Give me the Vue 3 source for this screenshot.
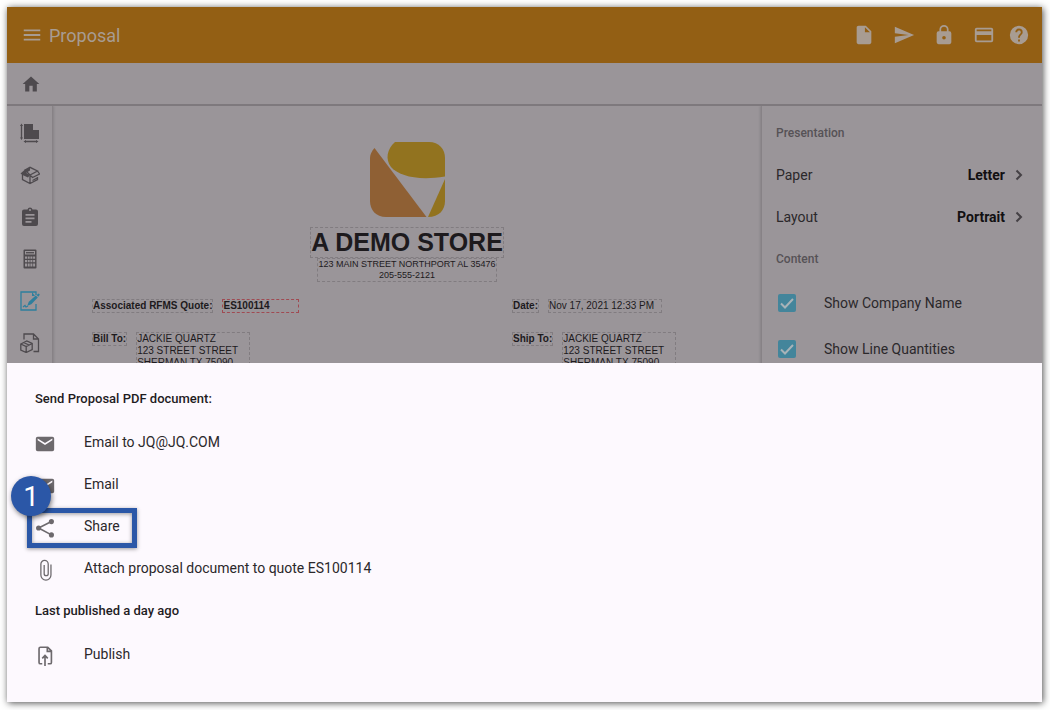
<script setup>
import { ref } from 'vue'

const actions = [
  { name: 'file', label: 'New document', d: 'M6 2c-1.100 0-2 .9-2 2v16c0 1.100.9 2 2 2h12c1.100 0 2-.9 2-2V8l-6-6H6zm7 7V3.500L18.500 9H13z' },
  { name: 'send', label: 'Send', d: 'M2 21l21-9L2 3v7l15 2-15 2z' },
  { name: 'lock', label: 'Lock', d: 'M18 8h-1V6A5 5 0 0 0 7 6v2H6a2 2 0 0 0-2 2v10a2 2 0 0 0 2 2h12a2 2 0 0 0 2-2V10a2 2 0 0 0-2-2zm-6 9a2 2 0 1 1 0-4 2 2 0 0 1 0 4zm3.100-9H8.900V6a3.100 3.100 0 0 1 6.200 0v2z' },
  { name: 'card', label: 'Payment', d: 'M20 4H4a2 2 0 0 0-2 2v12a2 2 0 0 0 2 2h16a2 2 0 0 0 2-2V6a2 2 0 0 0-2-2zm0 14H4v-6h16v6zm0-10H4V6h16v2z' },
  { name: 'help', label: 'Help', d: 'M12 2a10 10 0 1 0 0 20 10 10 0 0 0 0-20zm1 17h-2v-2h2v2zm2.070-7.750l-.9.920C13.450 12.900 13 13.500 13 15h-2v-.5c0-1.100.450-2.100 1.170-2.830l1.240-1.260A2 2 0 1 0 10 9H8a4 4 0 1 1 8 0c0 .880-.360 1.680-.930 2.250z' }
]

const tools = ['area', 'product', 'worksheet', 'calculator', 'proposal', 'order']

const settings = [
  { label: 'Paper', value: 'Letter' },
  { label: 'Layout', value: 'Portrait' }
]

const content = ref([
  { id: 'company', label: 'Show Company Name', on: true },
  { id: 'quantities', label: 'Show Line Quantities', on: true }
])

const address = ['JACKIE QUARTZ', '123 STREET STREET', 'SHERMAN TX 75090']

const sendItems = [
  { icon: 'mail', label: 'Email to JQ@JQ.COM' },
  { icon: 'mail', label: 'Email' },
  { icon: 'share', label: 'Share', step: 1 },
  { icon: 'clip', label: 'Attach proposal document to quote ES100114' }
]
</script>

<template>
  <div class="frame">
    <header class="appbar">
      <button class="icon-btn" aria-label="Menu">
        <svg width="22" height="22" viewBox="0 0 24 24"><path d="M3 18h18v-2H3v2zm0-5h18v-2H3v2zm0-7v2h18V6H3z" /></svg>
      </button>
      <h1>Proposal</h1>
      <nav class="actions">
        <button v-for="a in actions" :key="a.name" class="icon-btn" :aria-label="a.label">
          <svg width="22" height="22" viewBox="0 0 24 24"><path fill-rule="evenodd" :d="a.d" /></svg>
        </button>
      </nav>
    </header>

    <div class="crumbs">
      <button class="icon-btn" aria-label="Home">
        <svg width="20" height="20" viewBox="0 0 24 24"><path d="M10 21v-7h4v7h5v-9h3L12 3 2 12h3v9z" /></svg>
      </button>
    </div>

    <main class="workspace">
      <nav class="rail">
        <button v-for="t in tools" :key="t" class="icon-btn" :class="{ active: t === 'proposal' }" :aria-label="t">
          <svg width="20" height="20" viewBox="0 0 20 20">
            <template v-if="t === 'area'">
              <path d="M4 1h9v6h6v9H4z" />
              <path class="line" d="M1.500 2v13M5 18.500h12" />
              <path d="M0 3l1.500-2.500L3 3zM0 14.500L1.500 17 3 14.500zM6 17v3l-2.500-1.500zM16 17v3l2.500-1.500z" />
            </template>
            <template v-else-if="t === 'product'">
              <path class="line" d="M2.500 9v5.500L10 18.500l7.500-4V12M10 9.500v9M5 5l5-2.700 7.500 3.700L10 10zM17.500 6l2 3-7 3.500L10 10M12.500 15.500l5-2.700" />
              <path d="M4.500 5L.5 8.500 2.500 10 10 5.500V2.300zM2.500 10L8 12.500 10 10 4.500 7z" />
            </template>
            <template v-else-if="t === 'worksheet'">
              <path fill-rule="evenodd" d="M4 2.500h3.500a2.600 2.600 0 0 1 5 0H16a2 2 0 0 1 2 2V17a2 2 0 0 1-2 2H4a2 2 0 0 1-2-2V4.500a2 2 0 0 1 2-2zM10 2a1 1 0 1 0 0 2 1 1 0 0 0 0-2zM5.500 7v1.700h9V7zm0 3.500v1.700h9v-1.700zm0 3.500v1.700h6V14z" />
            </template>
            <template v-else-if="t === 'calculator'">
              <path fill-rule="evenodd" d="M4.500.5h11a1 1 0 0 1 1 1v17a1 1 0 0 1-1 1h-11a1 1 0 0 1-1-1v-17a1 1 0 0 1 1-1zM5 2v3.500h10V2zM5 7.500v2.200h2V7.500zm2.700 0v2.200h2V7.500zm2.700 0v2.200h2V7.500zm2.700 0v2.200h2V7.500zM5 11v2.200h2V11zm2.700 0v2.200h2V11zm2.700 0v2.200h2V11zm2.700 0v2.200h2V11zM5 14.500v3h2v-3zm2.700 0v3h2v-3zm2.700 0v3h2v-3zm2.700 0v3h2v-3z" />
              <path class="line" d="M6 3.700h8" />
            </template>
            <template v-else-if="t === 'proposal'">
              <path class="line" d="M16 4V1H1v18h15v-6" />
              <path d="M16.500 4l2.300-1.500 1 1.200-1.500 2.100zM15.800 4.600l2 1.900-6.500 6.800-4 1.500 1.500-4z" />
              <path class="line" d="M3 16l2-1.500 1 1.500 2-1" />
              <path d="M12 1v4l3 0z" />
            </template>
            <template v-else>
              <path class="line" d="M4 6.500V1h9.500L18.500 6v12.500h-5M13.500 1v5h5M.8 11l6-3 5.400 2.500v6l-6 3L.8 17zM.8 11l5.400 2.500 6-3M6.200 13.500v6M3.500 9.500l5.500 2.500" />
            </template>
          </svg>
        </button>
      </nav>

      <section class="document">
        <svg class="logo" width="75" height="75" viewBox="0 0 75 75">
          <path class="gold" d="M25 0h34c10 0 16 7 16 16v18.500C48 39 29 34 21 25 15 17 17 7 25 0z" />
          <path class="copper" d="M4.500 6L56.500 75H16C6 75 0 68 0 59V16C0 12 2 9 4.500 6z" />
          <path class="gold" d="M75 37v22c0 9-6 16-17 16z" />
        </svg>
        <h2 class="field">A DEMO STORE</h2>
        <p class="field store">123 MAIN STREET NORTHPORT AL 35476<br />205-555-2121</p>
        <div class="meta">
          <div class="pair"><b class="field">Associated RFMS Quote:</b><b class="field required">ES100114</b></div>
          <div class="pair"><b class="field">Date:</b><span class="field date">Nov 17, 2021 12:33 PM</span></div>
          <div class="pair"><b class="field">Bill To:</b><address class="field"><span v-for="l in address" :key="l">{{ l }}</span></address></div>
          <div class="pair"><b class="field">Ship To:</b><address class="field"><span v-for="l in address" :key="l">{{ l }}</span></address></div>
        </div>
      </section>

      <aside class="panel">
        <h3>Presentation</h3>
        <button v-for="s in settings" :key="s.label" class="setting">
          <span>{{ s.label }}</span>
          <b>{{ s.value }}</b>
          <svg width="8" height="12" viewBox="0 0 8 12"><path d="M1.500 1.500L6 6l-4.500 4.500" /></svg>
        </button>
        <h3>Content</h3>
        <label v-for="c in content" :key="c.id" class="check" :for="c.id">
          <span class="tick">
            <input :id="c.id" v-model="c.on" type="checkbox" />
            <svg v-if="c.on" width="18" height="18" viewBox="0 0 18 18"><path d="M3 9.500l4 4L15 5" /></svg>
          </span>
          {{ c.label }}
        </label>
      </aside>
    </main>

    <section class="sheet">
      <h3>Send Proposal PDF document:</h3>
      <ul>
        <li v-for="i in sendItems" :key="i.label">
          <button class="item">
            <svg width="22" height="22" viewBox="0 0 24 24">
              <path v-if="i.icon === 'mail'" d="M20 4H4a2 2 0 0 0-2 2v12a2 2 0 0 0 2 2h16a2 2 0 0 0 2-2V6a2 2 0 0 0-2-2zm0 4l-8 5-8-5V6l8 5 8-5v2z" />
              <g v-else-if="i.icon === 'share'">
                <path class="outline" d="M19 5L5 12l14 7.500" />
                <circle cx="19" cy="5" r="2.800" />
                <circle cx="5" cy="12" r="2.800" />
                <circle cx="19" cy="19.500" r="2.800" />
              </g>
              <path v-else class="outline thin" d="M18.500 6v11.500a5.500 5.500 0 0 1-11 0V5.500a4 4 0 0 1 8 0V16a2.200 2.200 0 0 1-4.400 0V6.500" />
            </svg>
            {{ i.label }}
          </button>
          <template v-if="i.step">
            <span class="highlight"></span>
            <span class="badge">{{ i.step }}</span>
          </template>
        </li>
      </ul>
      <h3>Last published a day ago</h3>
      <ul>
        <li>
          <button class="item">
            <svg width="22" height="22" viewBox="0 0 24 24">
              <path class="outline" d="M9 20.500H7a1.500 1.500 0 0 1-1.500-1.500V4A1.500 1.500 0 0 1 7 2.500h8L19 6.500V19a1.500 1.500 0 0 1-1.500 1.500H15M14.500 3v4H19M12 23V12M9 14.500l3-3 3 3" />
            </svg>
            Publish
          </button>
        </li>
      </ul>
    </section>
  </div>
</template>

<style>
body {
  background: #fff;
}
</style>

<style scoped>
.frame {
  display: flex;
  flex-direction: column;
  box-sizing: border-box;
  height: calc(100vh - 15px);
  margin: 7px 8px 8px 7px;
  background: #9a9599;
  box-shadow: 1px 1px 7px rgba(0, 0, 0, 0.7);
  font-family: Roboto, "Liberation Sans", sans-serif;
  font-size: 14px;
  color: #2b282b;
}

button {
  margin: 0;
  padding: 0;
  border: 0;
  background: none;
  color: inherit;
  font: inherit;
  text-align: left;
}

h1, h2, h3, p, ul {
  margin: 0;
  padding: 0;
}

ul {
  list-style: none;
}

svg {
  display: block;
  flex: none;
  fill: currentColor;
}

.icon-btn {
  display: flex;
  align-items: center;
  justify-content: center;
}

.appbar {
  display: flex;
  flex: none;
  align-items: center;
  height: 56px;
  padding: 0 12px 0 14px;
  background: #935f14;
  color: #a89c92;
}

.appbar h1 {
  margin-left: 6px;
  font-size: 18px;
  font-weight: 400;
}

.actions {
  display: flex;
  gap: 18px;
  margin-left: auto;
}

.actions .icon-btn:last-child {
  margin-left: -5px;
}

.crumbs {
  display: flex;
  flex: none;
  align-items: center;
  height: 41px;
  padding: 0 14px;
  border-bottom: 2px solid #7e797d;
  color: #4e4a4e;
}

.workspace {
  display: grid;
  flex: 1 1 0;
  grid-template-columns: 46px 1fr 281px;
  min-height: 0;
  overflow: hidden;
}

.rail {
  display: flex;
  flex-direction: column;
  gap: 22px;
  padding-top: 17px;
  border-right: 1px solid #878286;
  box-shadow: 1px 0 2px rgba(0, 0, 0, 0.12);
  color: #4e4a4e;
}

.rail .active {
  color: #2e7f9d;
}

.line {
  fill: none;
  stroke: currentColor;
  stroke-width: 1.3;
}

.document {
  display: flex;
  flex-direction: column;
  align-items: center;
  padding: 36px 39px 0;
  color: #1d1a1d;
  font-family: "Liberation Sans", Arial, sans-serif;
  font-size: 10px;
  line-height: 12px;
}

.gold {
  fill: #92731f;
}

.copper {
  fill: #8f6034;
}

.field {
  border: 1px dashed #817c80;
}

.document h2 {
  margin-top: 10px;
  font-size: 25px;
  line-height: 29px;
}

.store {
  font-size: 9px;
  line-height: 11px;
  text-align: center;
}

.meta {
  display: grid;
  grid-template-columns: 2fr 1fr;
  row-gap: 19px;
  align-self: stretch;
  margin-top: 17px;
}

.pair {
  display: flex;
  align-items: flex-start;
  gap: 9px;
  white-space: nowrap;
}

.required {
  min-width: 75px;
  border-color: #a04a52;
}

.date {
  min-width: 112px;
}

address {
  display: flex;
  flex-direction: column;
  min-width: 112px;
  font-style: normal;
}

.panel {
  padding: 6px 19px 0 14px;
  border-left: 1px solid #878286;
  box-shadow: -1px 0 2px rgba(0, 0, 0, 0.12);
}

h3 {
  font-size: 13px;
  font-weight: 500;
}

.panel h3 {
  color: #565256;
  font-size: 12px;
  line-height: 42px;
}

.setting {
  display: flex;
  align-items: center;
  width: 100%;
  height: 42px;
}

.setting b {
  margin-left: auto;
  margin-right: 10px;
  color: #121012;
  font-weight: 700;
}

.setting svg {
  fill: none;
  stroke: #454145;
  stroke-width: 2;
}

.check {
  display: flex;
  align-items: center;
  gap: 28px;
  height: 46px;
  padding-left: 2px;
  white-space: nowrap;
}

.tick {
  display: grid;
}

.tick input,
.tick svg {
  grid-area: 1 / 1;
}

.tick input {
  width: 18px;
  height: 18px;
  margin: 0;
  appearance: none;
  border-radius: 2px;
  background: #7b8b92;
}

.tick input:checked {
  background: #43859b;
}

.tick svg {
  fill: none;
  stroke: #a8b3b8;
  stroke-width: 2;
  pointer-events: none;
}

.sheet {
  flex: none;
  padding: 14px 28px 27px;
  background: #fdf9fe;
}

.sheet h3 {
  color: #1f1c1f;
  line-height: 44px;
}

.sheet li {
  position: relative;
}

.item {
  display: flex;
  align-items: center;
  gap: 28px;
  width: 100%;
  height: 42px;
}

.item svg {
  margin-top: 4px;
  margin-left: -1px;
  color: #6d696d;
}

.outline {
  fill: none;
  stroke: currentColor;
  stroke-width: 1.8;
}

.thin {
  stroke-width: 1.4;
}

.highlight {
  position: absolute;
  top: 3px;
  left: -8px;
  box-sizing: border-box;
  width: 110px;
  height: 40px;
  border: 5px solid #2b57a7;
  box-shadow: 0 1px 4px rgba(0, 0, 0, 0.4), inset 0 1px 4px rgba(0, 0, 0, 0.4);
  pointer-events: none;
}

.badge {
  position: absolute;
  top: -29px;
  left: -24px;
  width: 40px;
  height: 40px;
  border-radius: 50%;
  background: #2b57a7;
  box-shadow: 1px 2px 5px rgba(0, 0, 0, 0.5);
  color: #fff;
  font-size: 28px;
  line-height: 41px;
  text-align: center;
}
</style>
